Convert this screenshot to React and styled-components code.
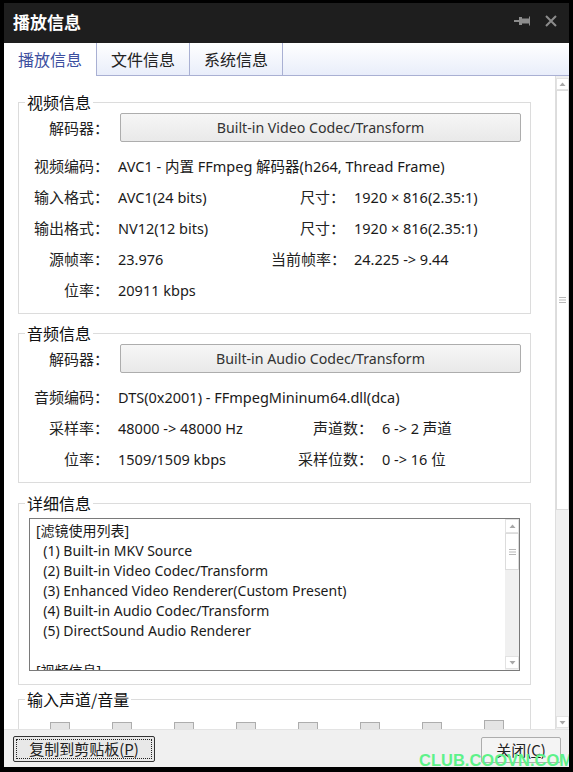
import React from 'react';
import styled, { createGlobalStyle } from 'styled-components';

const GlobalStyle = createGlobalStyle`
    html, body {
        margin: 0;
        padding: 0;
        background: #000;
    }
    * {
        box-sizing: border-box;
    }
`;

const Page = styled.div`
    width: 573px;
    height: 772px;
    padding: 3px 4px 5px 4px;
    background: #000;
    font-family: "Noto Sans", "Noto Sans CJK SC", sans-serif;
`;

const Window = styled.div`
    position: relative;
    width: 565px;
    height: 764px;
    display: flex;
    flex-direction: column;
    background: #fff;
    overflow: hidden;
`;

const TitleBar = styled.div`
    height: 40px;
    flex-shrink: 0;
    display: flex;
    align-items: center;
    justify-content: space-between;
    padding: 0 12px 4px 9px;
    background: #1e1e1e;
`;

const TitleText = styled.div`
    color: #fff;
    font-size: 17px;
    font-weight: 700;
    font-family: "Noto Sans CJK SC", sans-serif;
`;

const TitleIcons = styled.div`
    display: flex;
    align-items: center;
    gap: 15px;
`;

const TabBar = styled.div`
    height: 33px;
    flex-shrink: 0;
    display: flex;
    background: linear-gradient(#ffffff, #e8edfa);
`;

const Tab = styled.div`
    width: ${p => p.$w}px;
    display: flex;
    align-items: center;
    justify-content: center;
    padding-bottom: 1px;
    font-size: 16px;
    font-family: "Noto Sans CJK SC", sans-serif;
    color: ${p => p.$active ? '#3d4f9f' : '#222'};
    background: ${p => p.$active ? '#fff' : 'transparent'};
    border-right: 1px solid #a9b0d3;
    border-bottom: ${p => p.$active ? 'none' : '1px solid #a9b0d3'};
`;

const TabRest = styled.div`
    flex: 1;
    border-bottom: 1px solid #a9b0d3;
`;

const Body = styled.div`
    flex: 1;
    display: flex;
    min-height: 0;
`;

const Content = styled.div`
    flex: 1;
    overflow: hidden;
    padding: 16px 24px 0 14px;
`;

const Group = styled.fieldset`
    margin: ${p => p.$top || 0}px 0 0 0;
    padding: 0 0 ${p => p.$bottom || 8}px 0;
    min-width: 0;
    border: 1px solid #dcdcdc;
`;

const Legend = styled.legend`
    margin-left: 6px;
    padding: 0 2px;
    font-size: 16px;
    line-height: 20px;
    color: #111;
    font-family: "Noto Sans CJK SC", sans-serif;
`;

const DecoderRow = styled.div`
    display: flex;
    align-items: center;
    margin-top: 1px;
    height: 29px;
`;

const Row = styled.div`
    display: flex;
    align-items: center;
    height: 31px;
`;

const Rows = styled.div`
    margin-top: 8px;
`;

const Label = styled.div`
    width: ${p => p.$w || 90}px;
    flex-shrink: 0;
    text-align: right;
    font-size: 15px;
    color: #222;
    white-space: nowrap;
`;

const Value = styled.div`
    margin-left: ${p => p.$ml || 9}px;
    width: ${p => p.$w ? `${p.$w}px` : 'auto'};
    flex-shrink: 0;
    font-size: 14.5px;
    color: #1a1a1a;
    white-space: nowrap;
`;

const CodecButton = styled.div`
    margin-left: 11px;
    width: 401px;
    height: 29px;
    display: flex;
    align-items: center;
    justify-content: center;
    border: 1px solid #adadad;
    border-radius: 2px;
    background: linear-gradient(#f6f6f6, #e9e9e9);
    font-size: 14.2px;
    color: #333;
`;

const TextBox = styled.div`
    margin: 5px 10px 0 10px;
    height: 153px;
    display: flex;
    border: 1px solid #7a7a7a;
    background: #fff;
`;

const TextLines = styled.div`
    flex: 1;
    overflow: hidden;
    padding: 2px 0 0 6px;
    font-size: 14px;
    line-height: 20px;
    color: #1a1a1a;
    white-space: pre;
`;

const ScrollBar = styled.div`
    width: ${p => p.$w}px;
    flex-shrink: 0;
    display: flex;
    flex-direction: column;
    background: #f0f0f0;
    border-left: ${p => p.$outer ? '1px solid #dedede' : 'none'};
    padding-top: ${p => p.$outer ? 2 : 0}px;
    padding-bottom: 1px;
`;

const ScrollArrow = styled.div`
    height: ${p => p.$h}px;
    flex-shrink: 0;
    display: flex;
    align-items: center;
    justify-content: center;
    background: #fff;
    border: 1px solid #e2e2e2;
`;

const ScrollThumb = styled.div`
    height: ${p => p.$h}px;
    flex-shrink: 0;
    display: flex;
    align-items: center;
    justify-content: center;
    background: #fff;
    border: 1px solid #dcdcdc;
`;

const ScrollTrack = styled.div`
    flex: 1;
`;

const Meters = styled.div`
    display: flex;
    align-items: flex-end;
    gap: 42px;
    padding-left: 31px;
    margin-top: 11px;
`;

const Meter = styled.div`
    width: 20px;
    height: ${p => p.$h}px;
    background: #e4e4e4;
    border: 1px solid #adadad;
`;

const Footer = styled.div`
    height: 38px;
    flex-shrink: 0;
    display: flex;
    align-items: center;
    justify-content: space-between;
    padding: 0 8px 0 9px;
    background: #f0f0f0;
    border-top: 1px solid #e3e3e3;
`;

const DialogButton = styled.div`
    height: 26px;
    width: ${p => p.$w}px;
    display: flex;
    align-items: center;
    justify-content: center;
    margin-top: ${p => p.$mt || 0}px;
    border: 1px solid ${p => p.$focus ? '#333' : '#adadad'};
    border-radius: 2px;
    background: ${p => p.$focus ? '#e8e8e8' : '#f4f4f4'};
    font-size: 15px;
    font-family: "Noto Sans CJK SC", sans-serif;
    color: #222;
`;

const FocusRing = styled.div`
    flex: 1;
    align-self: stretch;
    margin: 2px;
    display: flex;
    align-items: center;
    justify-content: center;
    border: 1px dotted #222;
`;

const Mnemonic = styled.span`
    text-decoration: underline;
`;

const Watermark = styled.div`
    position: absolute;
    right: -4px;
    bottom: -3px;
    font-family: "Liberation Sans", Arial, sans-serif;
    font-size: 16.5px;
    font-weight: 700;
    color: #5ef28a;
`;

const PinIcon = () => (
    <svg width="16" height="10" viewBox="0 0 16 10">
        <rect x="0" y="4" width="6" height="2" fill="#8c8c8c" />
        <rect x="5" y="1" width="3" height="8" fill="#8c8c8c" />
        <path d="M8 2.5 H15 V0.5 H16 V9.5 H15 V7.5 H8 Z" fill="#8c8c8c" />
    </svg>
);

const CloseIcon = () => (
    <svg width="12" height="12" viewBox="0 0 12 12">
        <path d="M1 1 L11 11 M11 1 L1 11" stroke="#8c8c8c" strokeWidth="2" />
    </svg>
);

const ArrowUp = () => (
    <svg width="7" height="5" viewBox="0 0 7 5">
        <path d="M3.5 0.5 L6.5 4 H0.5 Z" fill="#a8a8a8" />
    </svg>
);

const ArrowDown = () => (
    <svg width="7" height="5" viewBox="0 0 7 5">
        <path d="M0.5 1 H6.5 L3.5 4.5 Z" fill="#a8a8a8" />
    </svg>
);

const Grip = () => (
    <svg width="7" height="6" viewBox="0 0 7 6">
        <path d="M0 0.5 H7 M0 3 H7 M0 5.5 H7" stroke="#b8b8b8" strokeWidth="1" />
    </svg>
);

const videoRows = [
    { label: '视频编码：', value: 'AVC1 - 内置 FFmpeg 解码器(h264, Thread Frame)' },
    { label: '输入格式：', value: 'AVC1(24 bits)', label2: '尺寸：', value2: '1920 × 816(2.35:1)' },
    { label: '输出格式：', value: 'NV12(12 bits)', label2: '尺寸：', value2: '1920 × 816(2.35:1)' },
    { label: '源帧率：', value: '23.976', label2: '当前帧率：', value2: '24.225 -> 9.44' },
    { label: '位率：', value: '20911 kbps' },
];

const audioRows = [
    { label: '音频编码：', value: 'DTS(0x2001) - FFmpegMininum64.dll(dca)' },
    { label: '采样率：', value: '48000 -> 48000 Hz', label2: '声道数：', value2: '6 -> 2 声道' },
    { label: '位率：', value: '1509/1509 kbps', label2: '采样位数：', value2: '0 -> 16 位' },
];

const detailLines = [
    '[滤镜使用列表]',
    '  (1) Built-in MKV Source',
    '  (2) Built-in Video Codec/Transform',
    '  (3) Enhanced Video Renderer(Custom Present)',
    '  (4) Built-in Audio Codec/Transform',
    '  (5) DirectSound Audio Renderer',
    '',
    '[视频信息]',
];

const meterHeights = [20, 20, 20, 20, 20, 20, 20, 22];

const InfoRows = ({ rows, label2Width }) => (
    <Rows>
        {rows.map((r, i) => (
            <Row key={i}>
                <Label>{r.label}</Label>
                <Value $w={r.label2 ? 153 : 0}>{r.value}</Value>
                {r.label2 && <Label $w={label2Width}>{r.label2}</Label>}
                {r.value2 && <Value $ml={9}>{r.value2}</Value>}
            </Row>
        ))}
    </Rows>
);

const App = () => {
    return (
        <Page>
            <GlobalStyle />
            <Window>
                <TitleBar>
                    <TitleText>播放信息</TitleText>
                    <TitleIcons>
                        <PinIcon />
                        <CloseIcon />
                    </TitleIcons>
                </TitleBar>
                <TabBar>
                    <Tab $w={93} $active>播放信息</Tab>
                    <Tab $w={93}>文件信息</Tab>
                    <Tab $w={93}>系统信息</Tab>
                    <TabRest />
                </TabBar>
                <Body>
                    <Content>
                        <Group>
                            <Legend>视频信息</Legend>
                            <DecoderRow>
                                <Label>解码器：</Label>
                                <CodecButton>Built-in Video Codec/Transform</CodecButton>
                            </DecoderRow>
                            <InfoRows rows={videoRows} label2Width={74} />
                        </Group>
                        <Group $top={9}>
                            <Legend>音频信息</Legend>
                            <DecoderRow>
                                <Label>解码器：</Label>
                                <CodecButton>Built-in Audio Codec/Transform</CodecButton>
                            </DecoderRow>
                            <InfoRows rows={audioRows} label2Width={102} />
                        </Group>
                        <Group $top={10} $bottom={13}>
                            <Legend>详细信息</Legend>
                            <TextBox>
                                <TextLines>{detailLines.join('\n')}</TextLines>
                                <ScrollBar $w={14}>
                                    <ScrollArrow $h={14}><ArrowUp /></ScrollArrow>
                                    <ScrollThumb $h={37}><Grip /></ScrollThumb>
                                    <ScrollTrack />
                                    <ScrollArrow $h={13}><ArrowDown /></ScrollArrow>
                                </ScrollBar>
                            </TextBox>
                        </Group>
                        <Group $top={4}>
                            <Legend>输入声道/音量</Legend>
                            <Meters>
                                {meterHeights.map((h, i) => (
                                    <Meter key={i} $h={h} />
                                ))}
                            </Meters>
                        </Group>
                    </Content>
                    <ScrollBar $w={14} $outer>
                        <ScrollArrow $h={12}><ArrowUp /></ScrollArrow>
                        <ScrollThumb $h={420}><Grip /></ScrollThumb>
                        <ScrollTrack />
                        <ScrollArrow $h={12}><ArrowDown /></ScrollArrow>
                    </ScrollBar>
                </Body>
                <Footer>
                    <DialogButton $w={142} $focus>
                        <FocusRing>复制到剪贴板(<Mnemonic>P</Mnemonic>)</FocusRing>
                    </DialogButton>
                    <DialogButton $w={80} $mt={2}>
                        关闭(<Mnemonic>C</Mnemonic>)
                    </DialogButton>
                </Footer>
                <Watermark>CLUB.COOVN.COM</Watermark>
            </Window>
        </Page>
    );
};

export default App;
